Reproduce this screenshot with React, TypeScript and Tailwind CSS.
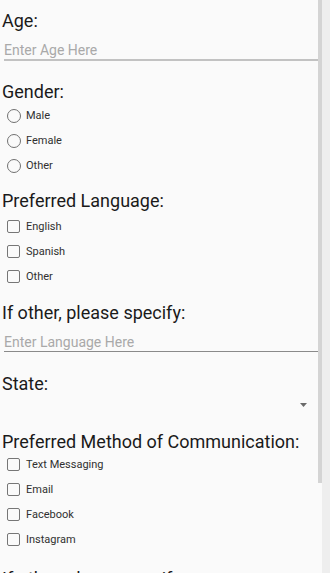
import React from "react";

const Label = ({ children, className = "" }: { children: React.ReactNode; className?: string }) => (
  <div className={`text-[18px] leading-[21px] text-[#1a1a1a] whitespace-nowrap ${className}`}>{children}</div>
);

const Radio = ({ label }: { label: string }) => (
  <div className="flex items-center h-[25px] pl-[5px] gap-[5px]">
    <div className="w-[14px] h-[14px] rounded-full border-[1.5px] border-[#717171] shrink-0" />
    <span className="text-[11px] leading-[13px] text-[#303030]">{label}</span>
  </div>
);

const Check = ({ label }: { label: string }) => (
  <div className="flex items-center h-[25px] pl-[5px] gap-[6px]">
    <div className="w-[13px] h-[13px] rounded-[2px] border-[1.5px] border-[#767676] shrink-0" />
    <span className="text-[11px] leading-[13px] text-[#303030]">{label}</span>
  </div>
);

export default function App() {
  return (
    <div
      className="h-[573px] w-[330px] overflow-hidden flex bg-[#fafafa]"
      style={{ fontFamily: "Roboto, 'Noto Sans', Arial, sans-serif" }}
    >
      <div className="relative w-[322px] h-full overflow-hidden">
        <div className="w-[318px] pl-[2px] pt-[10px]">
          <Label>Age:</Label>
          <div className="ml-[2px] mt-[11px] pb-[1px] border-b-2 border-[#c2c2c2]">
            <div className="text-[14px] leading-[16px] text-[#a9a9a9]">Enter Age Here</div>
          </div>

          <Label className="mt-[20px]">Gender:</Label>
          <div className="mt-[1px]">
            <Radio label="Male" />
            <Radio label="Female" />
            <Radio label="Other" />
          </div>

          <Label className="mt-[12px]">Preferred Language:</Label>
          <div className="mt-[3px]">
            <Check label="English" />
            <Check label="Spanish" />
            <Check label="Other" />
          </div>

          <Label className="mt-[13px]">If other, please specify:</Label>
          <div className="ml-[2px] mt-[11px] pb-[1px] border-b border-[#8a8a8a]">
            <div className="text-[14px] leading-[16px] text-[#a9a9a9]">Enter Language Here</div>
          </div>

          <Label className="mt-[21px]">State:</Label>
          <div className="h-[37px] flex justify-end pt-[9px] pr-[11px]">
            <svg width="7" height="4" viewBox="0 0 7 4">
              <polygon points="0,0 7,0 3.5,4" fill="#6a6a6a" />
            </svg>
          </div>

          <Label>Preferred Method of Communication:</Label>
          <div>
            <Check label="Text Messaging" />
            <Check label="Email" />
            <Check label="Facebook" />
            <Check label="Instagram" />
          </div>

          <Label className="mt-[16px]">If other, please specify:</Label>
          <div className="ml-[2px] mt-[11px] pb-[1px] border-b border-[#8a8a8a]">
            <div className="text-[14px] leading-[16px] text-[#a9a9a9]">Enter Method Here</div>
          </div>
        </div>
        <div className="absolute right-0 top-0 w-[4px] h-[483px] bg-[#d4d4d4]" />
      </div>
      <div className="w-[8px] h-full bg-[#eeeeee]" />
    </div>
  );
}
